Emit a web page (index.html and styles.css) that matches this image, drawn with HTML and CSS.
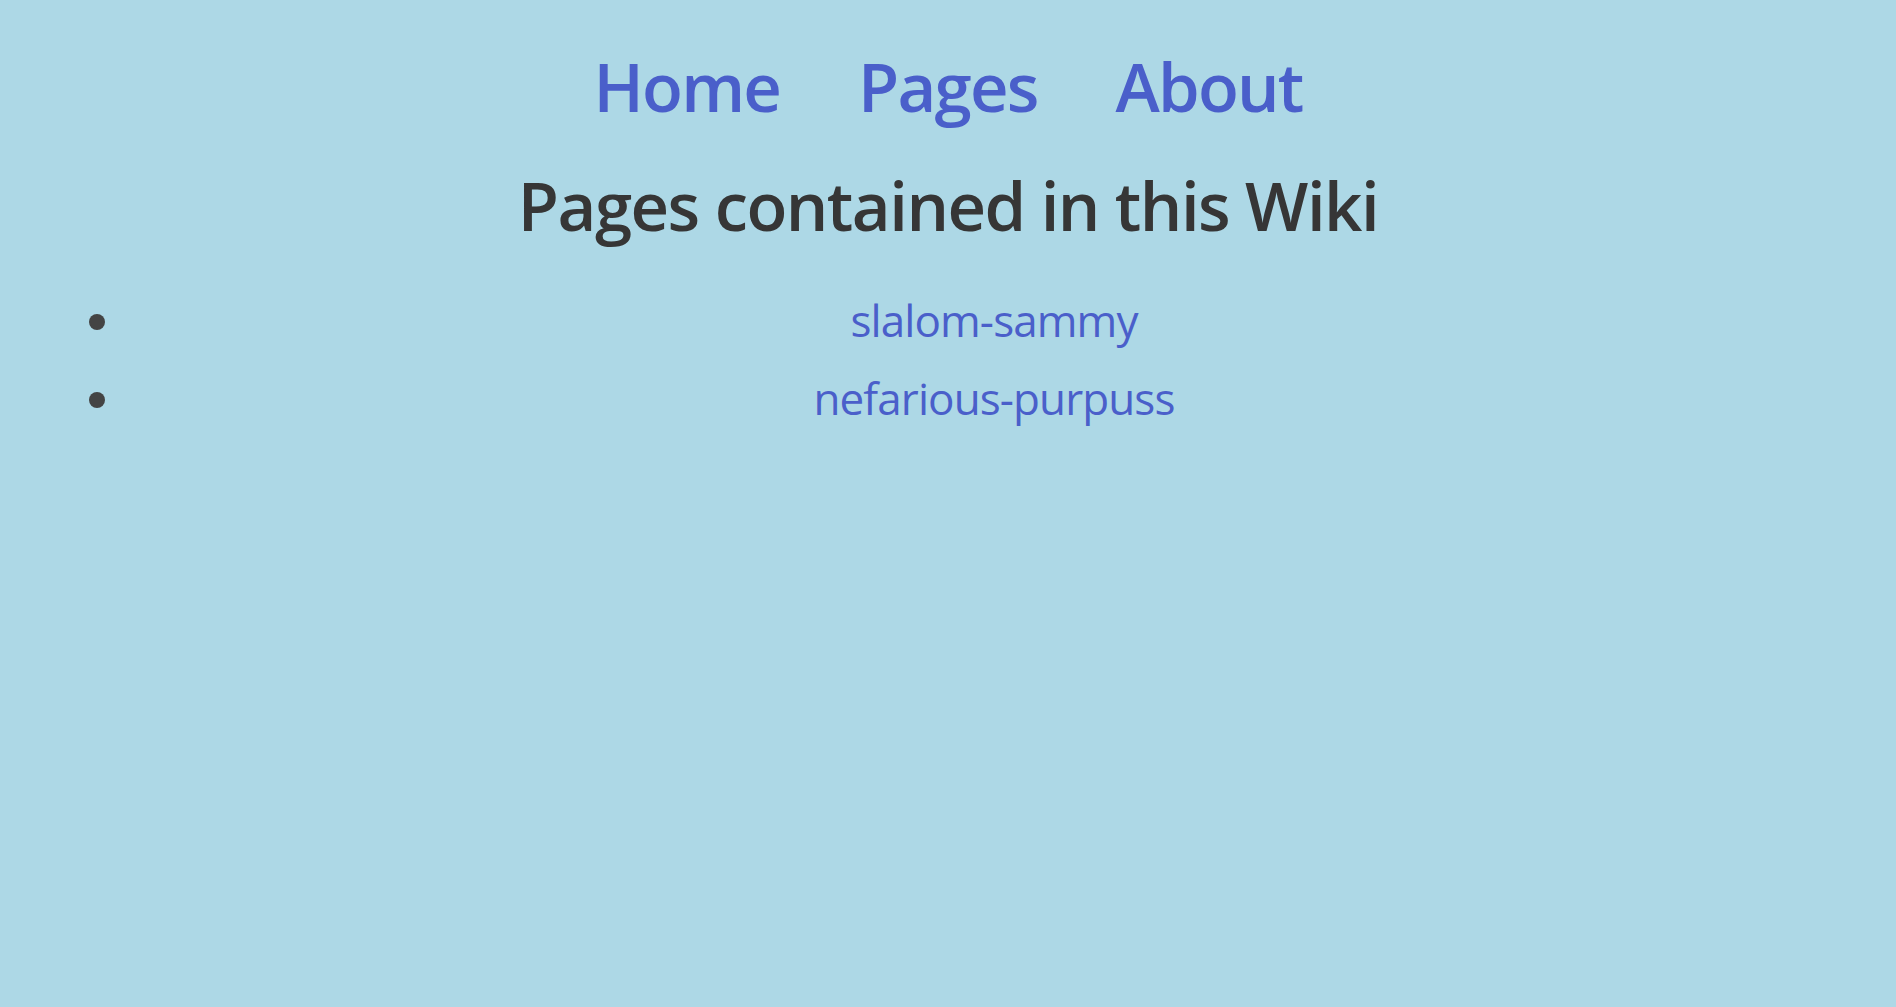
FILE: index.html
```html
<!DOCTYPE html>
<html lang="en">
<head>
<meta charset="utf-8">
<title>Pages</title>
<link rel="stylesheet" href="styles.css">
</head>
<body>
<nav class="nav">
  <a class="nav-link" href="#">Home</a>
  <a class="nav-link" href="#">Pages</a>
  <a class="nav-link" href="#">About</a>
</nav>
<h1 class="title">Pages contained in this Wiki</h1>
<ul class="page-list">
  <li class="page-item"><a class="page-link" href="#">slalom-sammy</a></li>
  <li class="page-item"><a class="page-link" href="#">nefarious-purpuss</a></li>
</ul>
</body>
</html>
```

FILE: styles.css
```css
html, body {
  margin: 0;
  padding: 0;
}
body {
  background: #add8e6;
  font-family: "Open Sans", "Noto Sans", sans-serif;
  color: #363636;
  min-height: 1007px;
}
.nav {
  display: flex;
  justify-content: center;
  gap: 78px;
  padding-top: 46px;
}
.nav-link {
  font-size: 67px;
  font-weight: 600;
  line-height: 80px;
  letter-spacing: -1.8px;
  color: #4a5fca;
  text-decoration: none;
}
.title {
  margin: 39px 0 0;
  text-align: center;
  font-size: 67px;
  font-weight: 600;
  line-height: 80px;
  letter-spacing: -1.5px;
  color: #363636;
}
.page-list {
  margin: 36px 0 0;
  padding: 0 35px 0 127px;
  color: #444;
}
.page-item {
  font-size: 44px;
  line-height: 78px;
  letter-spacing: -0.9px;
  text-align: center;
}
.page-link {
  color: #4a5fca;
  text-decoration: none;
}
```
